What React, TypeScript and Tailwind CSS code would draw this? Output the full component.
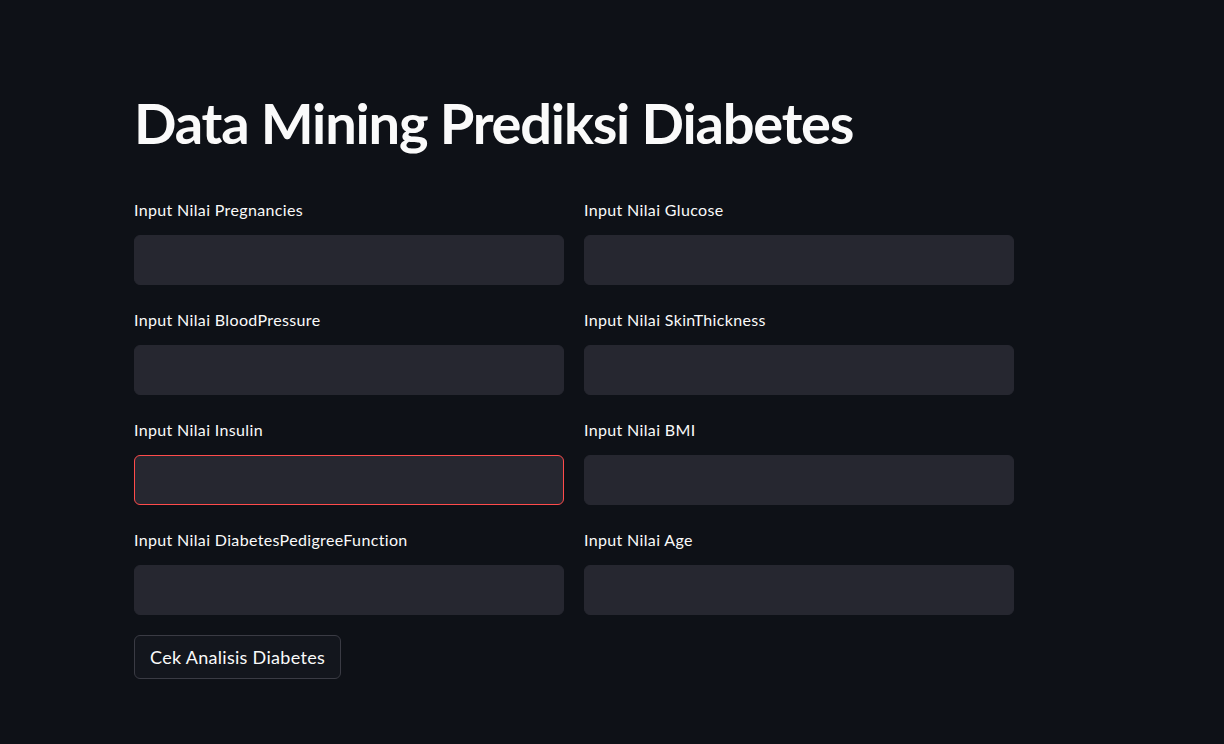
const fields = [
  ["Pregnancies", "Glucose"],
  ["BloodPressure", "SkinThickness"],
  ["Insulin", "BMI"],
  ["DiabetesPedigreeFunction", "Age"],
];

const Field = ({ name, error }: { name: string; error?: boolean }) => (
  <div className="flex flex-col">
    <label className="text-[16px] leading-5 tracking-[0.35px] text-[#fafafa] h-5">
      Input Nilai {name}
    </label>
    <div
      className={`mt-[15px] h-[50px] rounded-md bg-[#262730] border ${
        error ? "border-[#ff4b4b]" : "border-[#262730]"
      }`}
    />
  </div>
);

export default function App() {
  return (
    <div
      className="min-h-screen w-full bg-[#0e1117] text-[#fafafa]"
      style={{ fontFamily: "Lato, 'Noto Sans', sans-serif" }}
    >
      <div className="w-[880px] ml-[134px] pt-[88px]">
        <h1 className="text-[56px] leading-[70px] font-bold tracking-[-1.2px]">
          Data Mining Prediksi Diabetes
        </h1>
        <div className="mt-[42px] grid grid-cols-2 gap-x-5 gap-y-[25px]">
          {fields.map(([a, b]) => (
            <>
              <Field key={a} name={a} error={a === "Insulin"} />
              <Field key={b} name={b} />
            </>
          ))}
        </div>
        <button className="mt-5 h-[44px] px-[15px] rounded-md border border-[#3a3b44] bg-[#13161d] text-[18px] tracking-[0.3px] text-[#fafafa]">
          Cek Analisis Diabetes
        </button>
      </div>
    </div>
  );
}
